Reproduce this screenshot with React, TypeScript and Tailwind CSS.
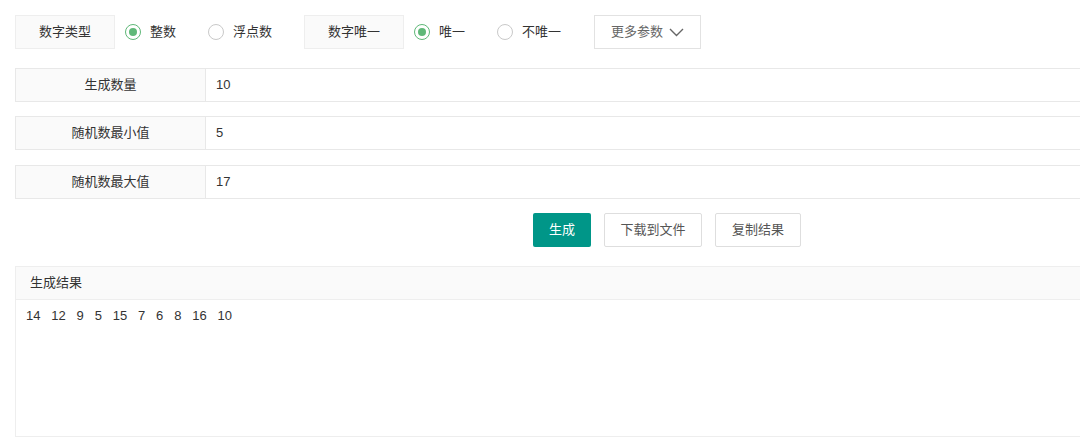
import { ReactNode } from "react";

const font = { fontFamily: '"Liberation Sans", "Noto Sans CJK SC", sans-serif' };

function Radio({ label, checked, className = "mr-[32px]" }: { label: string; checked?: boolean; className?: string }) {
  return (
    <div className={`flex items-center gap-[9px] ${className}`}>
      <span
        className={`flex h-[16px] w-[16px] items-center justify-center rounded-full border ${
          checked ? "border-[#5fb878]" : "border-[#c9c9c9]"
        }`}
      >
        {checked && <span className="h-[8px] w-[8px] rounded-full bg-[#5fb878]" />}
      </span>
      <span className="text-[13px] text-[#333]">{label}</span>
    </div>
  );
}

function Tag({ children }: { children: ReactNode }) {
  return (
    <div className="mr-[10px] flex h-[34px] w-[100px] items-center justify-center border border-[#eee] bg-[#fafafa] text-[13px] text-[#333]">
      {children}
    </div>
  );
}

function Field({ label, value, className = "" }: { label: string; value: string; className?: string }) {
  return (
    <div className={`flex h-[34px] w-[1200px] border border-[#e8e8e8] ${className}`}>
      <div className="flex w-[190px] items-center justify-center border-r border-[#e8e8e8] bg-[#fafafa] text-[13px] text-[#333]">
        {label}
      </div>
      <div className="flex flex-1 items-center bg-white px-[10px] text-[13px] text-[#333]">{value}</div>
    </div>
  );
}

export default function App() {
  const nums = [14, 12, 9, 5, 15, 7, 6, 8, 16, 10];
  return (
    <div className="h-[446px] w-[1080px] overflow-hidden bg-white pl-[15px] pt-[15px]" style={font}>
      {/* options row */}
      <div className="flex items-center">
        <Tag>数字类型</Tag>
        <Radio label="整数" checked />
        <Radio label="浮点数" />
        <Tag>数字唯一</Tag>
        <Radio label="唯一" checked />
        <Radio label="不唯一" className="mr-[33px]" />
        <button className="flex h-[34px] w-[107px] items-center justify-center gap-[6px] border border-[#e2e2e2] bg-white text-[13px] text-[#666]">
          更多参数
          <svg width="15" height="9" viewBox="0 0 15 9" fill="none" stroke="#666" strokeWidth="1.4">
            <polyline points="1,1 7.5,7.5 14,1" />
          </svg>
        </button>
      </div>

      <div className="mt-[19px] flex flex-col">
        <Field label="生成数量" value="10" />
        <Field label="随机数最小值" value="5" className="mt-[14px]" />
        <Field label="随机数最大值" value="17" className="mt-[15px]" />
      </div>

      <div className="mt-[14px] ml-[518px] flex gap-[13px]">
        <button className="h-[34px] w-[58px] rounded-[2px] bg-[#009688] text-[13px] text-white">生成</button>
        <button className="h-[34px] w-[98px] rounded-[2px] border border-[#dedede] bg-white text-[13px] text-[#555]">
          下载到文件
        </button>
        <button className="h-[34px] w-[86px] rounded-[2px] border border-[#dedede] bg-white text-[13px] text-[#555]">
          复制结果
        </button>
      </div>

      <div className="mt-[19px] h-[171px] w-[1200px] border border-[#eee]">
        <div className="flex h-[33px] items-center border-b border-[#eee] bg-[#fafafa] px-[14px] text-[13px] text-[#333]">
          生成结果
        </div>
        <div className="whitespace-pre px-[10px] pt-[6px] text-[13px] text-[#333]">{nums.join("   ")}</div>
      </div>
    </div>
  );
}
